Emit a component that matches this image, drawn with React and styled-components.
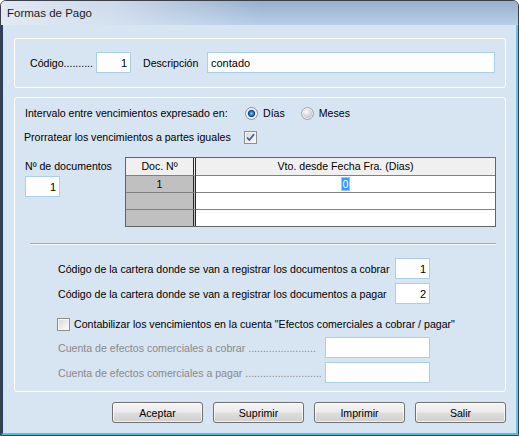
import React from 'react';
import styled, { createGlobalStyle } from 'styled-components';

const Global = createGlobalStyle`
  html, body { margin: 0; padding: 0; background: #ffffff; }
  body { font-family: "Liberation Sans", Arial, sans-serif; font-size: 10.6px; color: #000; }
  * { box-sizing: border-box; }
`;

const Window = styled.div`
  width: 519px;
  height: 436px;
  border: 1px solid #3a3f4a;
  border-radius: 6px 6px 0 0;
  display: flex;
  flex-direction: column;
  overflow: hidden;
  background: #d7e4f1;
`;

const TitleBar = styled.div`
  height: 24px;
  flex: none;
  display: flex;
  align-items: center;
  padding-left: 6px;
  font-size: 11.5px;
  color: #1b1b22;
  background:
    linear-gradient(to right, rgba(228,235,244,0.95) 0%, rgba(222,231,242,0.75) 22%, rgba(200,215,235,0) 50%),
    linear-gradient(#98afcc, #b8cfe8);
`;

const Body = styled.div`
  flex: 1;
  display: flex;
  flex-direction: column;
  padding: 13px 10px 0 11px;
  border-left: 2px solid #24407a;
  border-right: 2px solid #6cc3e4;
  border-bottom: 2px solid #46c3e8;
`;

const Group = styled.div`
  height: ${p => p.$h}px;
  margin-top: ${p => p.$mt || 0}px;
  border: 1px solid #ffffff;
  border-radius: 3px;
  display: flex;
  flex-direction: column;
  padding: ${p => p.$pad};
`;

const Row = styled.div`
  display: flex;
  align-items: center;
  height: ${p => p.$h || 16}px;
  margin-top: ${p => p.$mt || 0}px;
  margin-left: ${p => p.$ml || 0}px;
`;

const Label = styled.span`
  white-space: nowrap;
  color: ${p => (p.$disabled ? '#8a8a8a' : '#000')};
  width: ${p => (p.$w ? `${p.$w}px` : 'auto')};
  flex: none;
  margin-left: ${p => p.$ml || 0}px;
  margin-right: ${p => p.$mr || 0}px;
`;

const Input = styled.div`
  width: ${p => p.$w}px;
  height: 21px;
  flex: none;
  background: #ffffff;
  border: 1px solid #a9d0ea;
  display: flex;
  align-items: center;
  justify-content: ${p => (p.$right ? 'flex-end' : 'flex-start')};
  padding: 0 3px 0 3px;
  margin-top: ${p => p.$mt || 0}px;
  white-space: nowrap;
  font-size: 11px;
`;

const Radio = styled.span`
  width: 13px;
  height: 13px;
  border-radius: 50%;
  flex: none;
  border: 1px solid ${p => (p.$on ? '#8b8f96' : '#a4a7ab')};
  background: ${p =>
    p.$on
      ? 'radial-gradient(circle at 50% 50%, #9fd2ff 0, #2f87d8 1.6px, #0b3f86 3.4px, #dde2e8 3.8px, #f4f5f7 6px)'
      : 'radial-gradient(circle at 40% 35%, #fafafa 0, #e2e3e5 3px, #c7c9cc 6px)'};
  box-shadow: inset 0 0 0 1px rgba(255,255,255,0.6);
  margin-right: 5px;
`;

const RadioGroup = styled.div`
  display: flex;
  align-items: center;
`;

const RadioItem = styled.label`
  display: flex;
  align-items: center;
  margin-right: ${p => p.$mr || 0}px;
`;

const CheckBox = styled.span`
  width: 13px;
  height: 13px;
  flex: none;
  border: 1px solid #8e8f8f;
  background: linear-gradient(135deg, #d7d7d7 0%, #eeeeee 60%, #fbfbfb 100%);
  box-shadow: inset 0 0 0 1px #f4f4f4;
  display: flex;
  align-items: center;
  justify-content: center;
  margin-right: ${p => p.$mr || 0}px;
`;

const Docs = styled.div`
  display: flex;
  margin-top: 12px;
  height: 70px;
`;

const DocsLeft = styled.div`
  width: 100px;
  display: flex;
  flex-direction: column;
  padding-top: 3px;
`;

const Grid = styled.div`
  width: 371px;
  height: 70px;
  border: 1px solid #646464;
  display: grid;
  grid-template-columns: 70px 1fr;
  grid-template-rows: 18px 17px 17px 16px;
  background: #ffffff;
`;

const Cell = styled.div`
  display: flex;
  align-items: center;
  justify-content: center;
  background: ${p => (p.$head ? '#f0f0f0' : p.$fixed ? '#c0c0c0' : '#ffffff')};
  border-bottom: ${p => (p.$last ? 'none' : '1px solid #808080')};
  border-right: ${p => (p.$fixed || p.$headFixed ? '3px double #2a2a2a' : 'none')};
  padding-bottom: 1px;
  white-space: nowrap;
`;

const Selected = styled.span`
  background: #3399ff;
  color: #ffffff;
  padding: 0 1px;
  outline: 1px solid #9cc8f5;
  line-height: 12px;
`;

const Separator = styled.div`
  margin: 16px 0 0 5px;
  width: 466px;
  height: 2px;
  border-top: 1px solid #a3a8ae;
  border-bottom: 1px solid #f4f8fc;
`;

const Buttons = styled.div`
  display: flex;
  justify-content: flex-end;
  gap: 10px;
  margin-top: 10px;
`;

const Button = styled.button`
  width: 91px;
  height: 21px;
  border: 1px solid #707070;
  border-radius: 3px;
  background: linear-gradient(#f3f3f3 0%, #ebebeb 48%, #dddddd 52%, #d0d0d0 100%);
  box-shadow: inset 0 0 0 1px rgba(255,255,255,0.7);
  font-family: "Liberation Sans", Arial, sans-serif;
  font-size: 10.6px;
  color: #000;
  padding: 0;
`;

const Check = () => (
  <svg width="9" height="9" viewBox="0 0 9 9">
    <path d="M1 4.5 L3.4 7 L8 1.2" fill="none" stroke="#4657a6" strokeWidth="1.8" />
  </svg>
);

export default function App() {
  return (
    <>
      <Global />
      <Window>
        <TitleBar>Formas de Pago</TitleBar>
        <Body>
          <Group $h={50} $pad="0 0 1px 15px">
            <Row $h={48}>
              <Label $w={66}>Código..........</Label>
              <Input $w={35} $right>1</Input>
              <Label $w={64} $ml={12}>Descripción</Label>
              <Input $w={288}>contado</Input>
            </Row>
          </Group>

          <Group $h={295} $mt={9} $pad="7px 9px 0 10px">
            <Row>
              <Label $w={220}>Intervalo entre vencimientos expresado en:</Label>
              <RadioGroup>
                <RadioItem $mr={16}>
                  <Radio $on />
                  Días
                </RadioItem>
                <RadioItem>
                  <Radio />
                  Meses
                </RadioItem>
              </RadioGroup>
            </Row>
            <Row $mt={8}>
              <Label $w={220} $ml={-1}>Prorratear los vencimientos a partes iguales</Label>
              <CheckBox>
                <Check />
              </CheckBox>
            </Row>

            <Docs>
              <DocsLeft>
                <Label>Nº de documentos</Label>
                <Input $w={35} $right $mt={4}>1</Input>
              </DocsLeft>
              <Grid>
                <Cell $head $headFixed>Doc. Nº</Cell>
                <Cell $head>Vto. desde Fecha Fra. (Dias)</Cell>
                <Cell $fixed>1</Cell>
                <Cell><Selected>0</Selected></Cell>
                <Cell $fixed />
                <Cell />
                <Cell $fixed $last />
                <Cell $last />
              </Grid>
            </Docs>

            <Separator />

            <Row $h={21} $mt={13} $ml={33}>
              <Label $w={337}>Código de la cartera donde se van a registrar los documentos a cobrar</Label>
              <Input $w={35} $right>1</Input>
            </Row>
            <Row $h={21} $mt={4} $ml={33}>
              <Label $w={337}>Código de la cartera donde se van a registrar los documentos a pagar</Label>
              <Input $w={35} $right>2</Input>
            </Row>
            <Row $mt={12} $ml={32}>
              <CheckBox $mr={4} />
              <Label>Contabilizar los vencimientos en la cuenta "Efectos comerciales a cobrar / pagar"</Label>
            </Row>
            <Row $h={21} $mt={5} $ml={33}>
              <Label $w={267} $disabled>Cuenta de efectos comerciales a cobrar .......................</Label>
              <Input $w={105} />
            </Row>
            <Row $h={21} $mt={4} $ml={33}>
              <Label $w={267} $disabled>Cuenta de efectos comerciales a pagar ..........................</Label>
              <Input $w={105} />
            </Row>
          </Group>

          <Buttons>
            <Button>Aceptar</Button>
            <Button>Suprimir</Button>
            <Button>Imprimir</Button>
            <Button>Salir</Button>
          </Buttons>
        </Body>
      </Window>
    </>
  );
}
